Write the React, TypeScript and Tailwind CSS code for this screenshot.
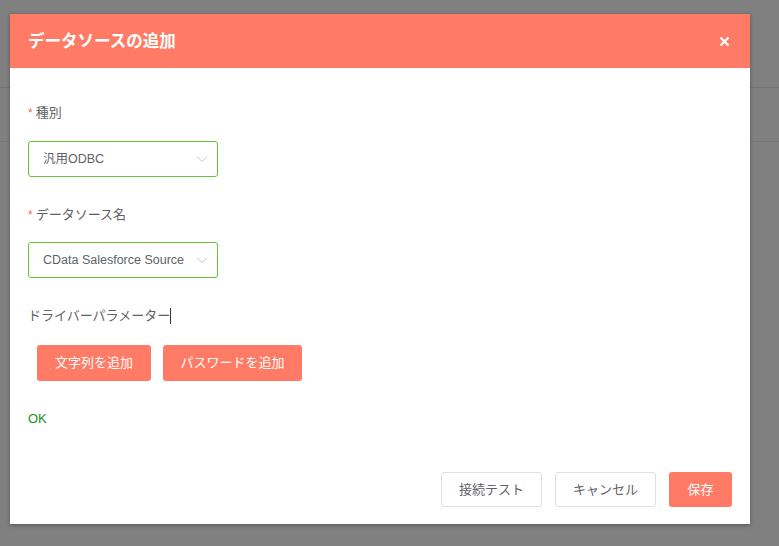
import React from 'react';

const font = { fontFamily: '"Liberation Sans", "Noto Sans CJK JP", sans-serif' };

const Chevron: React.FC = () => (
  <svg width="12" height="8" viewBox="0 0 12 8" fill="none">
    <path d="M1 1.5 L6 6.5 L11 1.5" stroke="#c0c4cc" strokeWidth="1" />
  </svg>
);

const Label: React.FC<{ text: string; required?: boolean }> = ({ text, required }) => (
  <div className="h-[20px] flex items-center text-[13px] text-[#606266]">
    {required && <span className="text-[#f56c6c] mr-[3px] text-[12px]">*</span>}
    {text}
  </div>
);

const Select: React.FC<{ value: string }> = ({ value }) => (
  <div className="w-[190px] h-[36px] border border-[#67c23a] rounded-[3px] flex items-center justify-between pl-[14px] pr-[9px] text-[12.5px] text-[#606266]">
    <span className="whitespace-nowrap">{value}</span>
    <Chevron />
  </div>
);

export default function App() {
  return (
    <div className="relative w-[779px] h-[546px] bg-[#808080] overflow-hidden" style={font}>
      {/* page behind overlay */}
      <div className="h-[88px] border-b border-[#747474]" />
      <div className="h-[54px] border-b border-[#777777]" />

      <div className="absolute left-[10px] top-[14px] w-[740px] h-[510px] bg-white shadow-[0_1px_4px_rgba(0,0,0,0.35)] flex flex-col">
        <div className="h-[54px] bg-[#ff7b65] flex items-center justify-between pl-[18px] pr-[20px]">
          <span className="text-white text-[16.5px] font-bold">データソースの追加</span>
          <svg width="11" height="11" viewBox="0 0 11 11">
            <path d="M1.5 1.5 L9.5 9.5 M9.5 1.5 L1.5 9.5" stroke="white" strokeWidth="2.2" />
          </svg>
        </div>

        <div className="flex-1 flex flex-col pl-[18px] pr-[18px] pt-[35px]">
          <Label text="種別" required />
          <div className="mt-[18px]">
            <Select value="汎用ODBC" />
          </div>
          <div className="mt-[28px]">
            <Label text="データソース名" required />
          </div>
          <div className="mt-[17px]">
            <Select value="CData Salesforce Source" />
          </div>
          <div className="mt-[28px] h-[20px] flex items-center text-[13px] text-[#606266]">
            ドライバーパラメーター
            <span className="inline-block w-px h-[16px] bg-[#303133]" />
          </div>
          <div className="mt-[19px] pl-[9px] flex gap-[12px]">
            <button className="h-[36px] w-[114px] rounded-[3px] bg-[#ff7b65] text-white text-[13px]">文字列を追加</button>
            <button className="h-[36px] w-[139px] rounded-[3px] bg-[#ff7b65] text-white text-[13px]">パスワードを追加</button>
          </div>
          <div className="mt-[30px] h-[16px] flex items-center text-[13px] text-[#1b8f1b]">OK</div>

          <div className="mt-auto mb-[17px] flex justify-end gap-[13px]">
            <button className="h-[35px] w-[101px] rounded-[3px] border border-[#dcdfe6] bg-white text-[13px] text-[#606266]">接続テスト</button>
            <button className="h-[35px] w-[101px] rounded-[3px] border border-[#dcdfe6] bg-white text-[13px] text-[#606266]">キャンセル</button>
            <button className="h-[35px] w-[63px] rounded-[3px] bg-[#ff7b65] text-white text-[13px]">保存</button>
          </div>
        </div>
      </div>
    </div>
  );
}
